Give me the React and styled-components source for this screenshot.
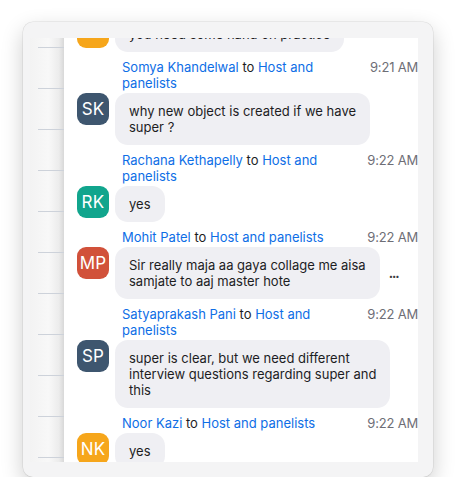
import React from 'react';
import styled, { createGlobalStyle } from "styled-components";

const GlobalStyle = createGlobalStyle`
    html, body {
        margin: 0;
        padding: 0;
        background: #ffffff;
        font-family: Inter, "Noto Sans", "Liberation Sans", sans-serif;
        -webkit-font-smoothing: antialiased;
    }
`;

const Window = styled.div`
    margin: 22px 0 0 23px;
    width: 410px;
    height: 455px;
    box-sizing: border-box;
    background-color: #f4f4f5;
    border-radius: 10px;
    box-shadow: 0 8px 22px rgba(0, 0, 0, 0.2), 0 0 0 0.5px rgba(0, 0, 0, 0.1);
    display: flex;
    padding: 16px 15px 15px 7px;
`;

const Strip = styled.div`
    width: 34px;
    flex-shrink: 0;
    background: linear-gradient(to right, #f3f3f3 0%, #f8f8f8 55%, #ececec 85%, #d8d8d8 100%);
    display: flex;
    flex-direction: column;
    padding-top: 9px;
    overflow: hidden;
`;

const StripLine = styled.div`
    height: 1px;
    margin-left: 8px;
    margin-bottom: 40px;
    background-color: #cdd2da;
    flex-shrink: 0;
`;

const Panel = styled.div`
    flex: 1;
    background-color: #ffffff;
    overflow: hidden;
`;

const List = styled.div`
    margin-top: -47px;
    display: flex;
    flex-direction: column;
`;

const Message = styled.div`
    padding: 7px 0 0 13px;
`;

const Header = styled.div`
    display: flex;
    justify-content: space-between;
    align-items: flex-start;
    margin-left: 45px;
    font-size: 13px;
    line-height: 16px;
`;

const Names = styled.div`
    max-width: 225px;
    color: #1d1d1f;
`;

const Link = styled.span`
    color: #0e6ee6;
`;

const Time = styled.div`
    color: #6e6e76;
    white-space: nowrap;
    letter-spacing: -0.2px;
`;

const Body = styled.div`
    display: flex;
    align-items: flex-start;
    gap: 6px;
    margin-top: 2px;
`;

const Avatar = styled.div`
    width: 32px;
    height: 32px;
    flex-shrink: 0;
    border-radius: 9px;
    background-color: ${p => p.$color};
    color: #ffffff;
    font-size: 17px;
    line-height: 32px;
    text-align: center;
    letter-spacing: 0.2px;
`;

const Bubble = styled.div`
    background-color: #efeff3;
    border-radius: 13px;
    padding: 10px 14px;
    font-size: 13px;
    line-height: 16px;
    color: #1d1d1f;
    white-space: nowrap;
`;

const More = styled.div`
    align-self: center;
    margin-left: 3px;
    font-size: 13px;
    font-weight: 700;
    letter-spacing: -1px;
    color: #3a3a3c;
`;

const ORANGE = "#f6a61b";
const SLATE = "#3e566f";
const TEAL = "#11a58d";
const RED = "#d1513a";

const messages = [
    { from: "Noor Kazi", initials: "NK", color: ORANGE, time: "9:20 AM", lines: ["you need some hand on practice"] },
    { from: "Somya Khandelwal", initials: "SK", color: SLATE, time: "9:21 AM", lines: ["why new object is created if we have", "super ?"] },
    { from: "Rachana Kethapelly", initials: "RK", color: TEAL, time: "9:22 AM", lines: ["yes"] },
    { from: "Mohit Patel", initials: "MP", color: RED, time: "9:22 AM", lines: ["Sir really maja aa gaya collage me aisa", "samjate to aaj master hote"], more: true },
    { from: "Satyaprakash Pani", initials: "SP", color: SLATE, time: "9:22 AM", lines: ["super is clear, but we need different", "interview questions regarding super and", "this"] },
    { from: "Noor Kazi", initials: "NK", color: ORANGE, time: "9:22 AM", lines: ["yes"] },
];

const App = () => {
  return (
    <>
      <GlobalStyle />
      <Window>
        <Strip>
          {Array.from({ length: 11 }).map((_, i) => <StripLine key={i} />)}
        </Strip>
        <Panel>
          <List>
            {messages.map((m, i) => (
              <Message key={i}>
                <Header>
                  <Names>
                    <Link>{m.from}</Link> to <Link>Host and panelists</Link>
                  </Names>
                  <Time>{m.time}</Time>
                </Header>
                <Body>
                  <Avatar $color={m.color}>{m.initials}</Avatar>
                  <Bubble>
                    {m.lines.map((l, j) => (
                      <React.Fragment key={j}>{j > 0 && <br />}{l}</React.Fragment>
                    ))}
                  </Bubble>
                  {m.more && <More>...</More>}
                </Body>
              </Message>
            ))}
          </List>
        </Panel>
      </Window>
    </>
  )
}

export default App
